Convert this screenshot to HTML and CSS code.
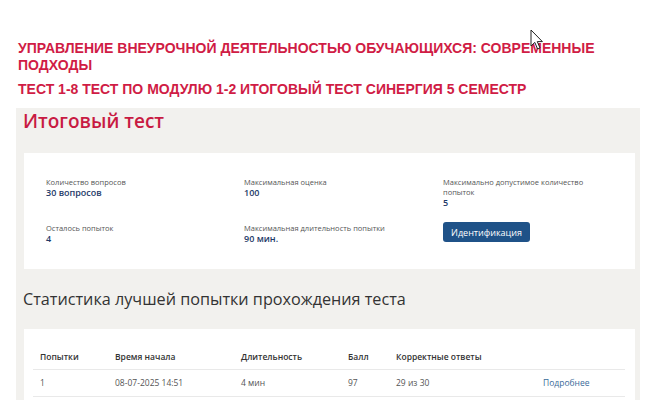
FILE: index.html
```html
<!DOCTYPE html>
<html lang="ru">
<head>
<meta charset="utf-8">
<title>Итоговый тест</title>
<link rel="stylesheet" href="styles.css">
</head>
<body>
<div class="page">
  <div class="titles">
    <h1 class="course">УПРАВЛЕНИЕ ВНЕУРОЧНОЙ ДЕЯТЕЛЬНОСТЬЮ ОБУЧАЮЩИХСЯ: СОВРЕМЕННЫЕ ПОДХОДЫ</h1>
    <h2 class="test-name">ТЕСТ 1-8 ТЕСТ ПО МОДУЛЮ 1-2 ИТОГОВЫЙ ТЕСТ СИНЕРГИЯ 5 СЕМЕСТР</h2>
  </div>
  <div class="panel">
    <div class="panel-title">Итоговый тест</div>
    <div class="card info">
      <div class="field">
        <div class="label">Количество вопросов</div>
        <div class="value">30 вопросов</div>
      </div>
      <div class="field">
        <div class="label">Максимальная оценка</div>
        <div class="value">100</div>
      </div>
      <div class="field">
        <div class="label narrow">Максимально допустимое количество попыток</div>
        <div class="value">5</div>
      </div>
      <div class="field">
        <div class="label">Осталось попыток</div>
        <div class="value">4</div>
      </div>
      <div class="field">
        <div class="label">Максимальная длительность попытки</div>
        <div class="value">90 мин.</div>
      </div>
      <div class="field">
        <button class="btn">Идентификация</button>
      </div>
    </div>
    <div class="section-title">Статистика лучшей попытки прохождения теста</div>
    <div class="card stats">
      <table class="table">
        <colgroup>
          <col class="c1"><col class="c2"><col class="c3"><col class="c4"><col class="c5"><col class="c6">
        </colgroup>
        <thead>
          <tr><th>Попытки</th><th>Время начала</th><th>Длительность</th><th>Балл</th><th>Корректные ответы</th><th></th></tr>
        </thead>
        <tbody>
          <tr><td>1</td><td>08-07-2025 14:51</td><td>4 мин</td><td>97</td><td>29 из 30</td><td><a class="more" href="#">Подробнее</a></td></tr>
        </tbody>
      </table>
    </div>
  </div>
  <svg class="cursor" width="14" height="22" viewBox="0 0 14 22">
    <path d="M1 1 L1 17 L4.8 13.4 L7.6 20 L10 19 L7.3 12.6 L12.4 12.6 Z" fill="#fff" stroke="#222" stroke-width="1" stroke-linejoin="round"/>
  </svg>
</div>
</body>
</html>
```

FILE: styles.css
```css
* { box-sizing: border-box; }
html, body { margin: 0; padding: 0; background: #fff; }
body { width: 658px; height: 400px; overflow: hidden; font-family: "Open Sans", "Noto Sans", sans-serif; }
.page { position: relative; }
.titles { padding: 40px 0 0 18px; width: 620px; }
.course, .test-name {
  margin: 0;
  font-family: "Liberation Sans", Arial, sans-serif;
  font-weight: bold;
  font-size: 14px;
  line-height: 17px;
  color: #d01c45;
}
.test-name { margin-top: 7px; }
.panel {
  margin: 10px 0 0 16px;
  width: 624px;
  height: 292px;
  background: #f2f1ee;
  padding: 1px 5px 0 8px;
}
.panel-title {
  margin-left: -1px;
  font-size: 19px;
  line-height: 24px;
  font-weight: 600;
  color: #c81a42;
}
.card { background: #fff; }
.info {
  margin-top: 20px;
  padding: 24px 10px 24px 22px;
  display: grid;
  grid-template-columns: 198px 199px 1fr;
  row-gap: 14px;
}
.label {
  font-size: 7.5px;
  line-height: 10px;
  color: #555;
}
.narrow { max-width: 160px; }
.value {
  font-size: 9px;
  line-height: 12px;
  font-weight: 600;
  color: #1e3a68;
}
.btn {
  display: block;
  margin-top: -1px;
  width: 87px;
  height: 20px;
  padding: 0;
  border: none;
  border-radius: 3px;
  background: #1f5288;
  color: #fff;
  font-family: "Open Sans", "Noto Sans", sans-serif;
  font-size: 9px;
  font-weight: 400;
}
.section-title {
  margin: 19px 0 0 -1px;
  font-size: 16.2px;
  line-height: 22px;
  color: #333;
}
.stats {
  margin-top: 19px;
  padding: 16px 10px 0 9px;
  height: 80px;
}
.table {
  width: 592px;
  border-collapse: collapse;
  table-layout: fixed;
  font-size: 8.5px;
}
.c1 { width: 75px; }
.c2 { width: 126px; }
.c3 { width: 107px; }
.c4 { width: 48px; }
.c5 { width: 147px; }
.c6 { width: 89px; }
.table th {
  text-align: left;
  font-weight: 600;
  color: #333;
  height: 24px;
  padding: 0 0 0 7px;
  border-bottom: 1px solid #e9e9e9;
}
.table td {
  color: #555;
  height: 27px;
  padding: 0 0 0 7px;
  border-bottom: 1px solid #e9e9e9;
}
.more { color: #3a6b9a; text-decoration: none; }
.cursor { position: absolute; left: 530px; top: 29px; }
```
